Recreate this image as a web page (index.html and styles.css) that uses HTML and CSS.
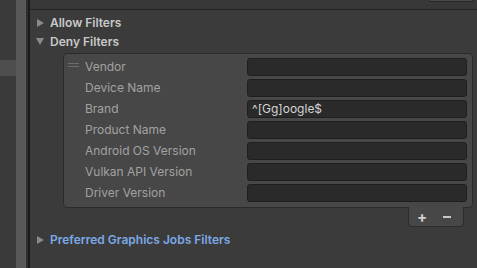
FILE: index.html
```html
<!DOCTYPE html>
<html lang="en">
	<head>
		<meta charset="UTF-8" />
		<title>Filters</title>
		<link rel="stylesheet" href="styles.css">
	</head>
	<body>
		<div class="sidebar">
			<div class="sidebar-item"></div>
		</div>
		<div class="scrollbar"></div>
		<div class="divider"></div>

		<div class="main">
			<div class="toolbar">
				<div class="toolbar-button"></div>
			</div>

			<div class="content">
				<div class="foldout">
					<span class="arrow right"></span>
					<span>Allow Filters</span>
				</div>
				<div class="foldout">
					<span class="arrow down"></span>
					<span>Deny Filters</span>
				</div>

				<div class="list">
					<div class="list-row">
						<span class="handle"></span>
						<span class="label">Vendor</span>
						<div class="field"></div>
					</div>
					<div class="list-row">
						<span class="handle hidden"></span>
						<span class="label">Device Name</span>
						<div class="field"></div>
					</div>
					<div class="list-row">
						<span class="handle hidden"></span>
						<span class="label">Brand</span>
						<div class="field">^[Gg]oogle$</div>
					</div>
					<div class="list-row">
						<span class="handle hidden"></span>
						<span class="label">Product Name</span>
						<div class="field"></div>
					</div>
					<div class="list-row">
						<span class="handle hidden"></span>
						<span class="label">Android OS Version</span>
						<div class="field"></div>
					</div>
					<div class="list-row">
						<span class="handle hidden"></span>
						<span class="label">Vulkan API Version</span>
						<div class="field"></div>
					</div>
					<div class="list-row">
						<span class="handle hidden"></span>
						<span class="label">Driver Version</span>
						<div class="field"></div>
					</div>
				</div>
				<div class="list-footer">
					<span class="footer-button">+</span>
					<span class="footer-button minus"></span>
				</div>

				<div class="foldout link">
					<span class="arrow right"></span>
					<span>Preferred Graphics Jobs Filters</span>
				</div>
			</div>
		</div>
	</body>
</html>
```

FILE: styles.css
```css
body {
	font-family: Inter, "Liberation Sans", sans-serif;
	font-size: 12px;
	margin: 0;
	padding: 0;
	width: 477px;
	height: 268px;
	overflow: hidden;
	background-color: #383838;
	display: flex;
}
.sidebar {
	width: 16px;
	background-color: #3a3a3a;
}
.sidebar-item {
	margin-top: 60px;
	height: 16px;
	background-color: #4e4e4e;
}
.scrollbar {
	width: 10px;
	background-color: #585858;
}
.divider {
	width: 2px;
	background-color: #2e2e2e;
	border-right: 2px solid #1b1b1b;
}
.main {
	flex: 1;
	display: flex;
	flex-direction: column;
}
.toolbar {
	height: 9px;
	border-bottom: 1px solid #232323;
	background-color: #383838;
	display: flex;
	justify-content: flex-end;
}
.toolbar-button {
	width: 42px;
	height: 1px;
	margin-right: 4px;
	background-color: #4a4a4a;
	border: 1px solid #262626;
	border-top: none;
	border-radius: 0 0 3px 3px;
}
.content {
	background-color: #3b3b3b;
	flex: 1;
	padding: 3px 4px 0 7px;
}
.foldout {
	height: 19px;
	display: flex;
	align-items: center;
	color: #c8c8c8;
	font-weight: 600;
}
.foldout.link {
	color: #7ba8e6;
	margin-top: 3px;
}
.arrow {
	width: 0;
	height: 0;
	margin-right: 5px;
}
.arrow.right {
	border-top: 4px solid transparent;
	border-bottom: 4px solid transparent;
	border-left: 7px solid #8a8a8a;
	margin-right: 6px;
}
.arrow.down {
	margin-left: -1px;
	margin-right: 6px;
	border-left: 4px solid transparent;
	border-right: 4px solid transparent;
	border-top: 7px solid #8a8a8a;
}
.list {
	margin: 2px 0 0 26px;
	padding: 2px 5px 4px 0;
	background-color: #474747;
	border: 1px solid #2b2b2b;
	border-radius: 4px;
}
.list-row {
	height: 21px;
	display: flex;
	align-items: center;
}
.handle {
	width: 11px;
	height: 2px;
	margin: 0 6px 3px 4px;
	border-top: 1px solid #6c6c6c;
	border-bottom: 1px solid #6c6c6c;
}
.handle.hidden {
	visibility: hidden;
}
.label {
	width: 162px;
	color: #a2a2a2;
}
.field {
	flex: 1;
	height: 16px;
	line-height: 16px;
	padding: 0 4px;
	background-color: #2a2a2a;
	border: 1px solid #1f1f1f;
	border-radius: 3px;
	color: #d4d4d4;
}
.list-footer {
	width: 56px;
	height: 20px;
	margin: -1px 9px 0 auto;
	padding-left: 3px;
	box-sizing: border-box;
	background-color: #474747;
	border: 1px solid #2b2b2b;
	border-top: none;
	border-radius: 0 0 4px 4px;
	display: flex;
	gap: 5px;
	align-items: center;
	color: #d0d0d0;
	font-weight: 700;
	font-size: 15px;
}
.footer-button {
	width: 20px;
	text-align: center;
}
.footer-button.minus {
	width: 8px;
	height: 2px;
	margin-left: 6px;
	background-color: #c8c8c8;
}
```
